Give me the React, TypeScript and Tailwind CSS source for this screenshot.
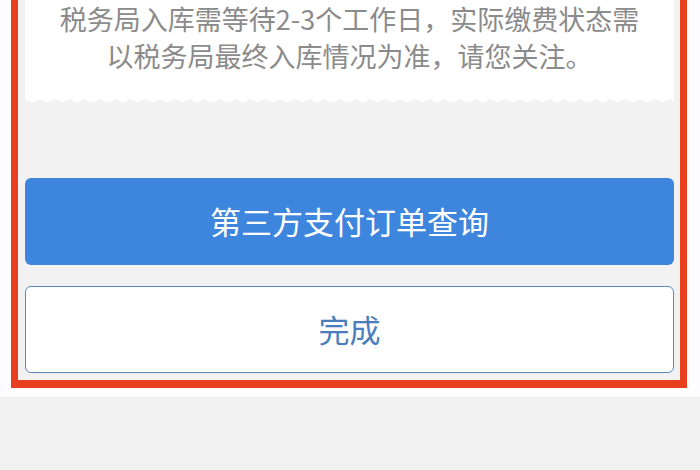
const font = { fontFamily: '"Noto Sans CJK SC", "Noto Sans", sans-serif' };

const WaveEdge = () => (
  <svg className="block w-full h-[7px]" preserveAspectRatio="none">
    <defs>
      <pattern id="scallop" width="15" height="7" patternUnits="userSpaceOnUse">
        <path d="M0 0 H15 V2 L12 3.5 Q7.5 7 3 3.5 L0 2 Z" fill="#ffffff" />
      </pattern>
    </defs>
    <rect width="100%" height="7" fill="url(#scallop)" />
  </svg>
);

export default function App() {
  return (
    <div className="w-[700px] h-[470px] overflow-hidden bg-[#f1f1f1]" style={font}>
      <div className="bg-[#fdfcff] pl-[11px] pr-[13px] pb-[9px]">
        <div className="border-x-[7px] border-b-[8px] border-[#e8401f] bg-[#f2f2f2] pl-[7px] pr-[6px] pb-[7px]">
          <div className="bg-white pb-[23px] text-center text-[27px] leading-[37px] text-[#8b8b8b]">
            <p>税务局入库需等待2-3个工作日，实际缴费状态需</p>
            <p>以税务局最终入库情况为准，请您关注。</p>
          </div>
          <WaveEdge />

          <button className="mt-[74px] flex h-[87px] w-full items-center justify-center rounded-[6px] bg-[#3e86dd] text-[31px] text-white">
            第三方支付订单查询
          </button>
          <button className="mt-[21px] flex h-[87px] w-full items-center justify-center rounded-[6px] border-[1.5px] border-[#5d88bd] bg-white text-[31px] text-[#4a7dbe]">
            完成
          </button>
        </div>
      </div>
    </div>
  );
}
